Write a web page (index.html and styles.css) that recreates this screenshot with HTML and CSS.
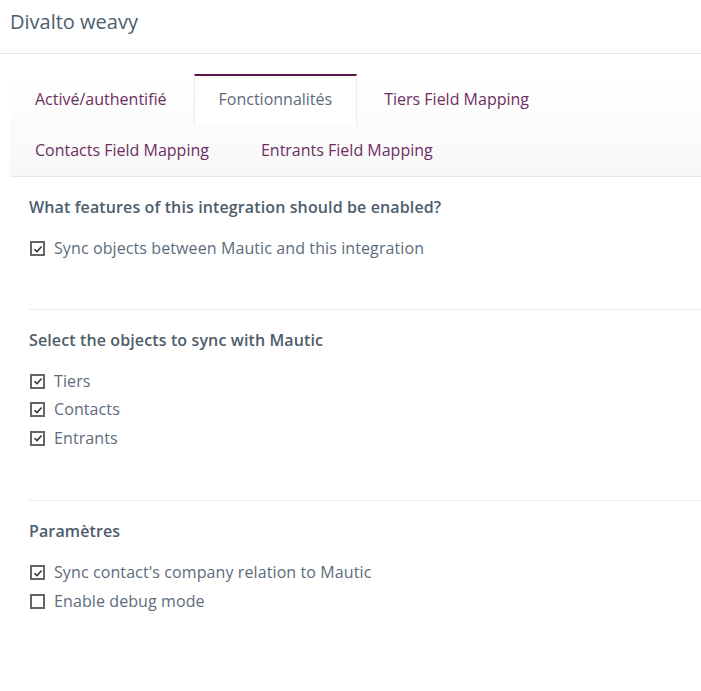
FILE: index.html
```html
<!DOCTYPE html>
<html>
<head>
<meta charset="utf-8">
<link rel="stylesheet" href="styles.css">
</head>
<body>
<div class="header">Divalto weavy</div>
<div class="tabs">
  <div class="tab">Activé/authentifié</div>
  <div class="tab active">Fonctionnalités</div>
  <div class="tab">Tiers Field Mapping</div>
  <div class="tab">Contacts Field Mapping</div>
  <div class="tab">Entrants Field Mapping</div>
</div>
<div class="content">
  <div class="section">
    <div class="title">What features of this integration should be enabled?</div>
    <label class="row"><span class="cb on"><svg viewBox="0 0 10 10"><path d="M1.5 5.2 L4 7.6 L8.6 2.6" fill="none" stroke="#333" stroke-width="1.5"/></svg></span>Sync objects between Mautic and this integration</label>
  </div>
  <div class="section">
    <div class="title">Select the objects to sync with Mautic</div>
    <label class="row"><span class="cb on"><svg viewBox="0 0 10 10"><path d="M1.5 5.2 L4 7.6 L8.6 2.6" fill="none" stroke="#333" stroke-width="1.5"/></svg></span>Tiers</label>
    <label class="row"><span class="cb on"><svg viewBox="0 0 10 10"><path d="M1.5 5.2 L4 7.6 L8.6 2.6" fill="none" stroke="#333" stroke-width="1.5"/></svg></span>Contacts</label>
    <label class="row"><span class="cb on"><svg viewBox="0 0 10 10"><path d="M1.5 5.2 L4 7.6 L8.6 2.6" fill="none" stroke="#333" stroke-width="1.5"/></svg></span>Entrants</label>
  </div>
  <div class="section">
    <div class="title">Paramètres</div>
    <label class="row"><span class="cb on"><svg viewBox="0 0 10 10"><path d="M1.5 5.2 L4 7.6 L8.6 2.6" fill="none" stroke="#333" stroke-width="1.5"/></svg></span>Sync contact's company relation to Mautic</label>
    <label class="row"><span class="cb"></span>Enable debug mode</label>
  </div>
</div>
</body>
</html>
```
FILE: styles.css
```css
html, body {
  margin: 0;
  padding: 0;
  background: #fff;
  font-family: "Open Sans", "Noto Sans", sans-serif;
  color: #5d6c7c;
}
.header {
  height: 54px;
  line-height: 44px;
  padding: 0 10px;
  font-size: 20px;
  color: #4e5d6c;
  border-bottom: 1px solid #e6e6e6;
  box-sizing: border-box;
}
.tabs {
  margin: 20px 0 0 10px;
  display: flex;
  flex-wrap: wrap;
  background: linear-gradient(#ffffff, #fafafa 70%, #f7f7f8);
  border-bottom: 1px solid #e6e6ee;
}
.tab {
  height: 51px;
  line-height: 46px;
  padding: 0 24px;
  margin-right: 2px;
  font-size: 16px;
  color: #6f2e63;
  box-sizing: border-box;
  border-top: 2px solid transparent;
  border-left: 1px solid transparent;
  border-right: 1px solid transparent;
}
.tab.active {
  background: #fff;
  color: #5d6c7c;
  border-top-color: #5d1449;
  border-left-color: #ececec;
  border-right-color: #ececec;
}
.content {
  padding-left: 29px;
}
.section {
  padding: 20px 0 48px;
  border-bottom: 1px solid #ececec;
}
.section:first-child { padding-bottom: 46px; }
.section:last-child { border-bottom: none; }
.title {
  font-size: 16px;
  font-weight: 600;
  line-height: 20px;
  letter-spacing: 0.12px;
  color: #4e5d6c;
  margin-bottom: 17px;
}
.row {
  display: flex;
  align-items: center;
  font-size: 16px;
  line-height: 28.5px;
  height: 28.5px;
  letter-spacing: 0.1px;
  color: #5d6c7c;
}
.cb {
  width: 15px;
  height: 15px;
  box-sizing: border-box;
  border: 2px solid #666;
  margin: 1px 9px 0 1px;
  display: flex;
  align-items: center;
  justify-content: center;
  flex: none;
}
.cb svg {
  width: 10px;
  height: 10px;
}
```
